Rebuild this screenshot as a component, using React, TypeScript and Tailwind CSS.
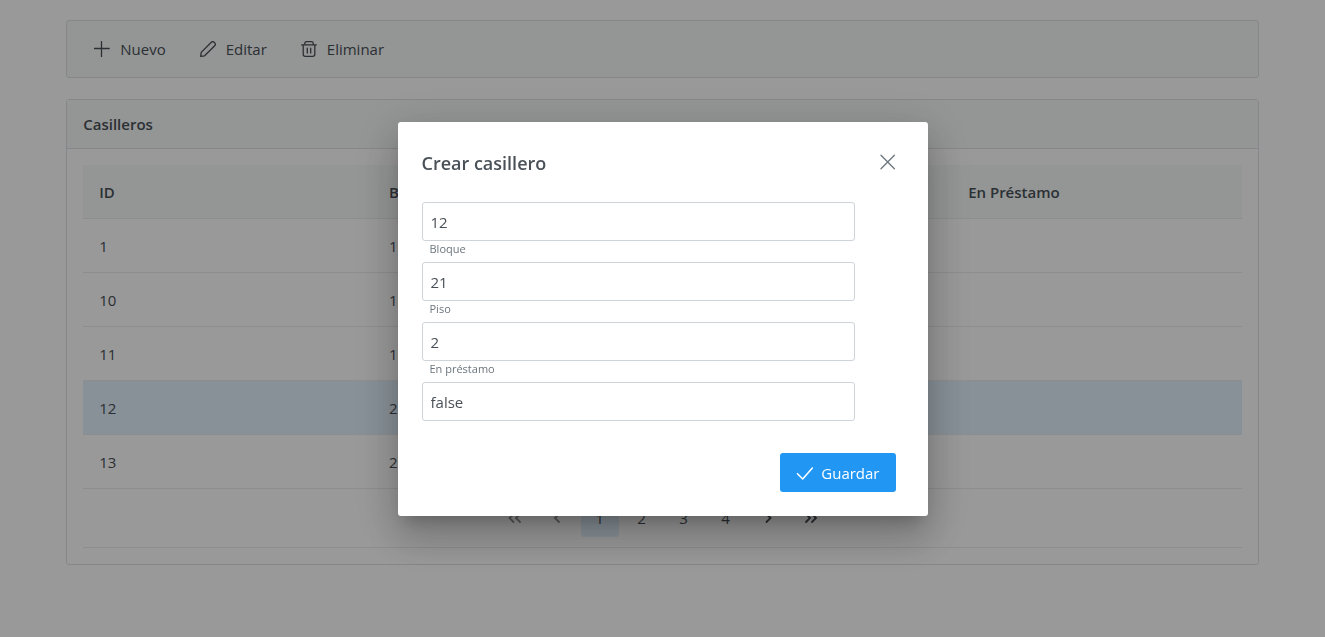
import { useState } from 'react';
import type { ReactNode } from 'react';

function Icon({ children, className = 'size-4' }: { children: ReactNode; className?: string }) {
  return (
    <svg
      aria-hidden="true"
      viewBox="0 0 16 16"
      fill="none"
      stroke="currentColor"
      strokeWidth="1.3"
      strokeLinecap="round"
      strokeLinejoin="round"
      className={`${className} shrink-0`}
    >
      {children}
    </svg>
  );
}

const PlusIcon = () => (
  <Icon>
    <path d="M7.5 .6v14.8M.4 7.5h14.8" />
  </Icon>
);

const PencilIcon = () => (
  <Icon>
    <path d="M.7 15.3l.5-3.9L11.3 1.3a2 2 0 0 1 2.8 0l.6.6a2 2 0 0 1 0 2.8L4.6 14.8z" />
  </Icon>
);

const TrashIcon = () => (
  <Icon>
    <path d="M.7 3.9h14.6M3.8 3.9V2.4Q3.8.7 5.5.7h5q1.7 0 1.7 1.7v1.5M2.2 3.9v9.4q0 2 2 2h7.6q2 0 2-2V3.9M6.3 7.2v4.8M9.7 7.2v4.8" />
  </Icon>
);

const TimesIcon = () => (
  <Icon>
    <path d="M1 1.2l13.4 13.6M14.4 1.2L1 14.8" />
  </Icon>
);

const CheckIcon = () => (
  <Icon className="size-[17px]">
    <path d="M1.4 8.2l4.9 5L15.4 2.8" strokeWidth="1.5" />
  </Icon>
);

const chevrons = {
  first: 'M5.5 4l-4 4 4 4M12 4L8 8l4 4',
  prev: 'M9 4L5 8l4 4',
  next: 'M6.5 4l4 4-4 4',
  last: 'M4 4l4 4-4 4M10 4l4 4-4 4',
};

function ToolbarButton({ icon, label }: { icon: ReactNode; label: string }) {
  return (
    <button type="button" className="flex h-9 items-center gap-2.5 rounded-[3px] px-[17px]">
      {icon}
      {label}
    </button>
  );
}

function PagerButton({
  children,
  label,
  active = false,
  disabled = false,
}: {
  children: ReactNode;
  label: string;
  active?: boolean;
  disabled?: boolean;
}) {
  return (
    <button
      type="button"
      aria-label={label}
      disabled={disabled}
      className={`flex size-[38px] items-center justify-center rounded-[3px] ${
        active ? 'bg-[#e3f2fd]' : ''
      } ${disabled ? 'opacity-60' : ''}`}
    >
      {children}
    </button>
  );
}

function PagerIcon({ d }: { d: string }) {
  return (
    <svg
      aria-hidden="true"
      viewBox="0 0 16 16"
      fill="none"
      stroke="currentColor"
      strokeWidth="1.8"
      strokeLinecap="round"
      className="size-4"
    >
      <path d={d} />
    </svg>
  );
}

const columns = ['ID', 'Bloque', 'Piso', 'En Préstamo'];

const rows = [
  { id: 1, bloque: 19, piso: 1 },
  { id: 10, bloque: 19, piso: 1 },
  { id: 11, bloque: 19, piso: 1 },
  { id: 12, bloque: 21, piso: 2 },
  { id: 13, bloque: 21, piso: 2 },
];

const cellClass = 'h-[54px] border-b border-[#e9ecef] px-4 py-0';

const inputClass =
  'block h-[39px] w-full rounded-[3px] border border-[#ced4da] bg-white px-2 pt-0.5 text-[15px] text-[#495057] outline-none';

function Field({
  id,
  label,
  value,
  onChange,
}: {
  id: string;
  label: string;
  value: string;
  onChange: (value: string) => void;
}) {
  return (
    <div>
      <label htmlFor={id} className="block h-[21px] pl-2 text-[11px] leading-4 text-[#6c757d]">
        {label}
      </label>
      <input id={id} value={value} onChange={(e) => onChange(e.target.value)} className={inputClass} />
    </div>
  );
}

export default function App() {
  const [form, setForm] = useState({ id: '12', bloque: '21', piso: '2', prestamo: 'false' });

  return (
    <div className="min-h-screen bg-white font-['Open_Sans',sans-serif] text-[15px] leading-[22px] text-[#495057]">
      <main className="mx-[5%] flex flex-col gap-[21px] pt-5">
        <div
          role="toolbar"
          className="flex items-center rounded-[3px] border border-[#dee2e6] bg-[#f7faf9] px-2.5 py-2.5"
        >
          <ToolbarButton icon={<PlusIcon />} label="Nuevo" />
          <ToolbarButton icon={<PencilIcon />} label="Editar" />
          <ToolbarButton icon={<TrashIcon />} label="Eliminar" />
        </div>

        <section className="rounded-[3px] border border-[#dee2e6]">
          <h2 className="flex h-[49px] items-center border-b border-[#dee2e6] bg-[#f7faf9] px-4 font-semibold">
            Casilleros
          </h2>
          <div className="p-4">
            <table className="w-full table-fixed border-separate border-spacing-0 text-left">
              <thead>
                <tr className="bg-[#f7faf9]">
                  {columns.map((column) => (
                    <th key={column} scope="col" className={`${cellClass} font-semibold`}>
                      {column}
                    </th>
                  ))}
                </tr>
              </thead>
              <tbody>
                {rows.map((row) => (
                  <tr key={row.id} className={row.id === 12 ? 'bg-[#e3f2fd]' : ''}>
                    <td className={cellClass}>{row.id}</td>
                    <td className={cellClass}>{row.bloque}</td>
                    <td className={cellClass}>{row.piso}</td>
                    <td className={cellClass} />
                  </tr>
                ))}
              </tbody>
            </table>
            <nav className="flex h-[59px] items-center justify-center gap-1 border-b border-[#e9ecef]">
              <PagerButton label="Primera" disabled>
                <PagerIcon d={chevrons.first} />
              </PagerButton>
              <PagerButton label="Anterior" disabled>
                <PagerIcon d={chevrons.prev} />
              </PagerButton>
              <PagerButton label="Página 1" active>
                1
              </PagerButton>
              <PagerButton label="Página 2">2</PagerButton>
              <PagerButton label="Página 3">3</PagerButton>
              <PagerButton label="Página 4">4</PagerButton>
              <PagerButton label="Siguiente">
                <PagerIcon d={chevrons.next} />
              </PagerButton>
              <PagerButton label="Última">
                <PagerIcon d={chevrons.last} />
              </PagerButton>
            </nav>
          </div>
        </section>
      </main>

      <div className="fixed inset-0 flex items-center justify-center bg-black/40">
        <div
          role="dialog"
          aria-modal="true"
          aria-labelledby="dialog-title"
          className="w-[40vw] rounded-[3px] bg-white shadow-[0_11px_15px_-7px_rgba(0,0,0,0.2),0_24px_38px_3px_rgba(0,0,0,0.14),0_9px_46px_8px_rgba(0,0,0,0.12)]"
        >
          <header className="flex items-center justify-between p-6">
            <h1 id="dialog-title" className="pt-0.5 text-lg font-semibold leading-[30px]">
              Crear casillero
            </h1>
            <button
              type="button"
              aria-label="Cerrar"
              className="flex size-8 items-center justify-center text-[#6c757d]"
            >
              <TimesIcon />
            </button>
          </header>
          <form className="px-6 pb-8" onSubmit={(e) => e.preventDefault()}>
            <div className="w-[90%]">
              <input
                aria-label="ID"
                value={form.id}
                onChange={(e) => setForm({ ...form, id: e.target.value })}
                className={inputClass}
              />
              <Field
                id="bloque"
                label="Bloque"
                value={form.bloque}
                onChange={(bloque) => setForm({ ...form, bloque })}
              />
              <Field id="piso" label="Piso" value={form.piso} onChange={(piso) => setForm({ ...form, piso })} />
              <Field
                id="prestamo"
                label="En préstamo"
                value={form.prestamo}
                onChange={(prestamo) => setForm({ ...form, prestamo })}
              />
            </div>
          </form>
          <footer className="flex justify-end pb-6 pl-6 pr-8">
            <button
              type="button"
              className="flex h-[39px] items-center gap-2 rounded-[3px] bg-[#2196f3] px-4 pt-0.5 text-white"
            >
              <CheckIcon />
              Guardar
            </button>
          </footer>
        </div>
      </div>
    </div>
  );
}
